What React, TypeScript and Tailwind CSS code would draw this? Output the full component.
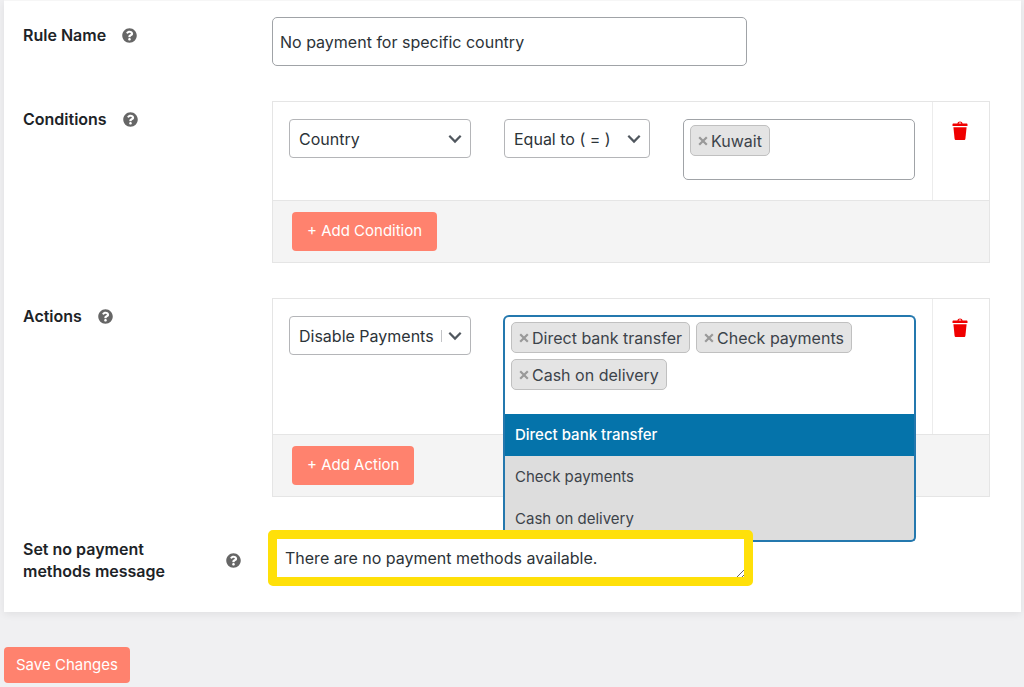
import { useState } from "react";
import type { ReactNode } from "react";
import { FaQuestionCircle } from "react-icons/fa";

function Row({
  label,
  htmlFor,
  wide,
  children,
}: {
  label: string;
  htmlFor?: string;
  wide?: boolean;
  children: ReactNode;
}) {
  return (
    <div className="flex items-start">
      <div className={"flex w-[249px] shrink-0 items-center " + (wide ? "pt-1.5" : "gap-4 pt-[7px]")}>
        <label
          htmlFor={htmlFor}
          className={"text-base leading-[22px] font-semibold text-[#1d2327] " + (wide ? "w-[203px] pr-10" : "")}
        >
          {label}
        </label>
        <FaQuestionCircle className="size-[15px] shrink-0 text-[#666]" aria-label="Help" />
      </div>
      <div className="min-w-0 flex-1">{children}</div>
    </div>
  );
}

function Dropdown({ label, options, className, divider }: { label: string; options: string[]; className: string; divider?: boolean }) {
  return (
    <div className={"relative shrink-0 " + className}>
      <select
        aria-label={label}
        className="block h-[39px] w-full appearance-none rounded-[4px] border border-[#b4b5b8] bg-white pr-6 pl-[9px] text-base text-[#2c3338]"
      >
        {options.map((o) => (
          <option key={o}>{o}</option>
        ))}
      </select>
      {divider && <span className="absolute top-3.5 right-[29px] h-3 w-px bg-[#c3c4c7]" />}
      <svg viewBox="0 0 14 10" className="pointer-events-none absolute top-[15px] right-[9px] h-2.5 w-3.5" aria-hidden="true">
        <path d="M1.3 1.8 7 7.6l5.7-5.8" fill="none" stroke="#50575e" strokeWidth="2.2" />
      </svg>
    </div>
  );
}

function Chip({ text }: { text: string }) {
  return (
    <li className="flex h-[31px] items-center gap-[3px] rounded-[5px] border border-[#c0c0c0] bg-[#e4e4e4] px-[7px] text-base whitespace-nowrap text-[#3c434a]">
      <button type="button" aria-label={"Remove " + text} className="text-[#999]">
        <svg viewBox="0 0 10 10" className="size-2.5">
          <path d="M1.2 1.2 8.8 8.8M8.8 1.2 1.2 8.8" stroke="currentColor" strokeWidth="2.2" />
        </svg>
      </button>
      {text}
    </li>
  );
}

function TrashButton({ label }: { label: string }) {
  return (
    <button type="button" aria-label={label} className="text-[#f00000]">
      <svg viewBox="0 0 16 20" className="h-5 w-4" fill="currentColor">
        <path d="M5.4 2.6C5.6 1.2 6.6.5 8 .5s2.4.7 2.6 2.1h3.9c.6 0 1 .4 1 1v1.4H.5V3.6c0-.6.4-1 1-1zm1.300 0h2.600C9.200 2 8.700 1.600 8 1.600S6.800 2 6.700 2.600z" />
        <path d="M1.400 6.200h13.200l-1.200 11.500c-.1.900-.6 1.400-1.400 1.400H4c-.8 0-1.300-.5-1.400-1.400z" />
      </svg>
    </button>
  );
}

function RuleBox({ children, removeLabel, addLabel }: { children: ReactNode; removeLabel: string; addLabel: string }) {
  return (
    <div className="mr-[31px] border border-[#e5e5e5]">
      <div className="flex">
        <div className="flex min-w-0 flex-1 items-start px-4 pt-[17px]">{children}</div>
        <div className="flex w-[57px] shrink-0 items-start justify-center border-l border-[#ececec] pt-[19px] pr-0.5">
          <TrashButton label={removeLabel} />
        </div>
      </div>
      <div className="border-t border-[#e5e5e5] bg-[#f4f4f4] px-[19px] py-[11px]">
        <button type="button" className="block h-[39px] rounded-[4px] bg-[#ff826e] px-[15px] text-[15px] text-white">
          {addLabel}
        </button>
      </div>
    </div>
  );
}

const payments = ["Direct bank transfer", "Check payments", "Cash on delivery"];

export default function App() {
  const [active, setActive] = useState(0);
  return (
    <form
      className="min-h-screen bg-[#f0f0f2] pr-[3px] pb-1 pl-1 font-['Inter','Noto_Sans',sans-serif]"
      onSubmit={(e) => e.preventDefault()}
    >
      <div className="flex flex-col gap-[35px] border-t border-[#f6f6f6] bg-white pt-4 pb-[30px] pl-[19px] shadow-[0_2px_8px_rgba(0,0,0,0.07)]">
        <Row label="Rule Name" htmlFor="rule-name">
          <input
            id="rule-name"
            type="text"
            defaultValue="No payment for specific country"
            className="block h-[49px] w-[475px] max-w-full rounded-[5px] border border-[#a0a3a7] bg-white px-[7px] text-base text-[#2c3338]"
          />
        </Row>

        <Row label="Conditions">
          <RuleBox removeLabel="Remove condition" addLabel="+ Add Condition">
            <Dropdown label="Condition field" options={["Country"]} className="w-[182px]" />
            <Dropdown label="Operator" options={["Equal to ( = )"]} className="ml-[33px] w-[146px]" />
            <div className="mr-px mb-5 ml-[33px] h-[61px] flex-1 rounded-[5px] border border-[#a0a3a7] bg-white px-1.5 py-[5px]">
              <ul className="flex flex-wrap gap-1.5">
                <Chip text="Kuwait" />
              </ul>
            </div>
          </RuleBox>
        </Row>

        <Row label="Actions">
          <RuleBox removeLabel="Remove action" addLabel="+ Add Action">
            <Dropdown label="Action type" options={["Disable Payments"]} className="w-[182px]" divider />
            <div className="relative -mt-px mb-[19px] ml-8 h-[100px] flex-1 rounded-t-[6px] border-2 border-b-0 border-[#2478ae] bg-white px-1.5 pt-[5px]">
              <ul className="flex flex-wrap gap-1.5">
                {payments.map((p) => (
                  <Chip key={p} text={p} />
                ))}
              </ul>
              <ul
                role="listbox"
                aria-label="Payment methods"
                className="absolute top-[97px] -right-0.5 -left-0.5 z-10 overflow-hidden rounded-b-[5px] border-2 border-t-0 border-[#2478ae] bg-[#ddd]"
              >
                {payments.map((p, i) => (
                  <li
                    key={p}
                    role="option"
                    aria-selected={i === active}
                    onMouseEnter={() => setActive(i)}
                    className={
                      "flex h-[42px] items-center px-2.5 text-[15px] " +
                      (i === active ? "bg-[#0573aa] font-medium text-white" : "text-[#3c434a]")
                    }
                  >
                    {p}
                  </li>
                ))}
              </ul>
            </div>
          </RuleBox>
        </Row>

        <Row label="Set no payment methods message" htmlFor="message" wide>
          <div className="relative z-20 mt-0.5 h-12 w-[475px] max-w-full">
            <textarea
              id="message"
              rows={1}
              defaultValue="There are no payment methods available."
              className="block h-12 w-full resize-none overflow-hidden bg-white px-[13px] py-3 text-base text-[#2c3338]"
            />
            <svg viewBox="0 0 8 8" className="absolute right-[3px] bottom-1 size-2" aria-hidden="true">
              <path d="M0 8 8 0M5 8 8 5" stroke="#666" strokeWidth="1" />
            </svg>
            <div className="pointer-events-none absolute -inset-y-1 -right-1.5 -left-1 rounded-[5px] border-[9px] border-[#ffe009]" />
          </div>
        </Row>
      </div>

      <button type="submit" className="mt-[35px] h-9 rounded-[4px] bg-[#ff826e] px-3 text-[15px] text-white">
        Save Changes
      </button>
    </form>
  );
}
